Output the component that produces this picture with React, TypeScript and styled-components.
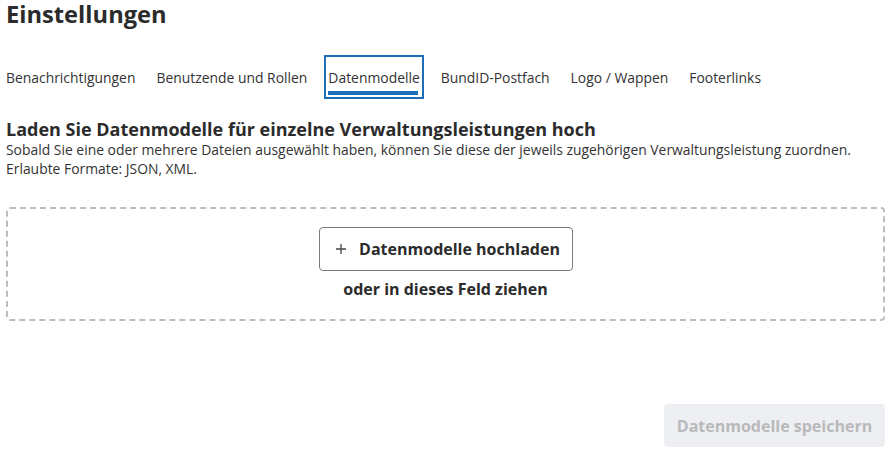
import styled, { createGlobalStyle } from 'styled-components'

const GlobalStyle = createGlobalStyle`
  html, body {
    margin: 0;
    padding: 0;
    background: #fff;
  }
  body {
    font-family: 'Open Sans', 'Noto Sans', sans-serif;
    color: #333;
  }
`

const Page = styled.div`
  width: 896px;
  height: 456px;
  box-sizing: border-box;
  padding: 0 11px 9px 6px;
  display: flex;
  flex-direction: column;
`

const Title = styled.h1`
  margin: 0;
  font-size: 23.7px;
  line-height: 28px;
  font-weight: 700;
  color: #2b2b2b;
`

const TabList = styled.div`
  display: flex;
  gap: 13px;
  margin: 27px 0 0 -4px;
`

const Tab = styled.button<{ $active?: boolean }>`
  position: relative;
  height: 44px;
  box-sizing: border-box;
  padding: 0 2px;
  border: 2px solid ${(p) => (p.$active ? '#1d6eb7' : 'transparent')};
  background: none;
  font-family: inherit;
  font-size: 13.9px;
  color: #333;
  cursor: pointer;
  &::after {
    content: '';
    display: ${(p) => (p.$active ? 'block' : 'none')};
    position: absolute;
    left: 2px;
    right: 4px;
    bottom: 2px;
    height: 4px;
    background: #1d6eb7;
  }
`

const Section = styled.section`
  margin-top: 19px;
`

const SectionTitle = styled.h2`
  margin: 0;
  font-size: 18px;
  line-height: 22px;
  font-weight: 700;
  color: #2b2b2b;
`

const Hint = styled.p`
  margin: 0;
  font-size: 13.9px;
  line-height: 19px;
`

const DropZone = styled.div`
  margin-top: 29px;
  height: 114px;
  box-sizing: border-box;
  border: 2px dashed #bdbdc0;
  border-radius: 4px;
  display: flex;
  flex-direction: column;
  align-items: center;
  padding-top: 18px;
  gap: 7px;
`

const UploadButton = styled.button`
  width: 254px;
  height: 44px;
  box-sizing: border-box;
  padding: 0 0 0 5px;
  border: 1px solid #7a7a7a;
  border-radius: 4px;
  background: #fff;
  display: flex;
  align-items: center;
  justify-content: center;
  gap: 13px;
  font-family: inherit;
  font-size: 16px;
  font-weight: 700;
  color: #2b2b2b;
  cursor: pointer;
`

const DropHint = styled.div`
  font-size: 16px;
  line-height: 22px;
  font-weight: 700;
  color: #2b2b2b;
`

const Footer = styled.div`
  margin-top: auto;
  display: flex;
  justify-content: flex-end;
`

const SaveButton = styled.button`
  width: 221px;
  height: 43px;
  border: none;
  border-radius: 4px;
  background: #eeeff2;
  color: #b9b9bc;
  font-family: inherit;
  font-size: 16px;
  font-weight: 700;
`

const tabs = [
  'Benachrichtigungen',
  'Benutzende und Rollen',
  'Datenmodelle',
  'BundID-Postfach',
  'Logo / Wappen',
  'Footerlinks',
]

export default function App() {
  return (
    <>
      <GlobalStyle />
      <Page>
        <Title>Einstellungen</Title>
        <TabList>
          {tabs.map((t) => (
            <Tab key={t} $active={t === 'Datenmodelle'}>
              {t}
            </Tab>
          ))}
        </TabList>
        <Section>
          <SectionTitle>
            Laden Sie Datenmodelle für einzelne Verwaltungsleistungen hoch
          </SectionTitle>
          <Hint>
            Sobald Sie eine oder mehrere Dateien ausgewählt haben, können Sie
            diese der jeweils zugehörigen Verwaltungsleistung zuordnen.
          </Hint>
          <Hint>Erlaubte Formate: JSON, XML.</Hint>
          <DropZone>
            <UploadButton>
              <svg width="10" height="10" viewBox="0 0 10 10">
                <path d="M5 0v10M0 5h10" stroke="#444" strokeWidth="1.3" />
              </svg>
              Datenmodelle hochladen
            </UploadButton>
            <DropHint>oder in dieses Feld ziehen</DropHint>
          </DropZone>
        </Section>
        <Footer>
          <SaveButton disabled>Datenmodelle speichern</SaveButton>
        </Footer>
      </Page>
    </>
  )
}
